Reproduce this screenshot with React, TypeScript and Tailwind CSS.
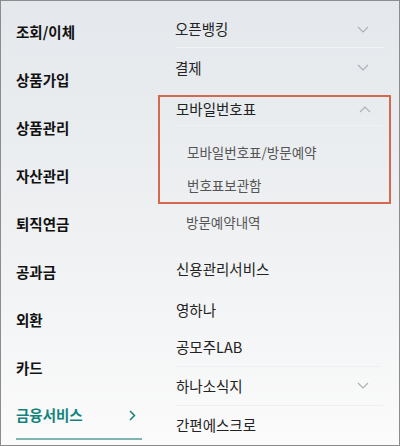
const font = { fontFamily: '"Noto Sans CJK KR", "Noto Sans", sans-serif' };

const leftMenu = ["조회/이체", "상품가입", "상품관리", "자산관리", "퇴직연금", "공과금", "외환", "카드"];

function ChevronDown() {
  return (
    <svg width="12" height="7" viewBox="0 0 12 7" fill="none" className="mr-[14px]">
      <path d="M1 1l5 5 5-5" stroke="#aab0b4" strokeWidth="1.2" />
    </svg>
  );
}

function ChevronUp() {
  return (
    <svg width="12" height="7" viewBox="0 0 12 7" fill="none" className="mr-[12px]">
      <path d="M1 6l5-5 5 5" stroke="#aab0b4" strokeWidth="1.2" />
    </svg>
  );
}

export default function App() {
  return (
    <div
      style={font}
      className="flex h-[446px] w-[400px] overflow-hidden border border-[#8c8c8c] bg-gradient-to-b from-[#e4e8ec] via-[#eef0f2] to-[#fbfbfb]"
    >
      {/* left menu */}
      <div className="flex w-[157px] shrink-0 flex-col pt-[7px]">
        {leftMenu.map((label) => (
          <div key={label} className="flex h-[48px] items-center pl-[15px] text-[14.5px] font-bold text-[#111]">
            {label}
          </div>
        ))}
        <div className="ml-[15px] mr-[16px] flex h-[48px] items-center justify-between border-b-2 border-[#7fb5b1] pr-[6px] text-[14.5px] font-bold text-[#14827d]">
          금융서비스
          <svg width="7" height="11" viewBox="0 0 7 11" fill="none">
            <path d="M1 1l4.5 4.5L1 10" stroke="#1b7f7a" strokeWidth="1.5" />
          </svg>
        </div>
      </div>

      {/* right menu */}
      <div className="flex w-[233px] flex-col pt-[10px] text-[14.5px] text-[#222]">
        <div className="mx-[17px] mr-[8px] flex h-[38px] items-center justify-between border-b border-[#f1f3f5]">
          오픈뱅킹
          <ChevronDown />
        </div>
        <div className="mx-[17px] mr-[8px] flex h-[40px] items-center justify-between">
          결제
          <ChevronDown />
        </div>

        <div className="mt-[7px] border-2 border-[#d5684f]">
          <div className="mx-[16px] mr-[6px] flex h-[29px] items-center justify-between border-b border-[#f1f3f5] pb-[3px]">
            모바일번호표
            <ChevronUp />
          </div>
          <div className="pt-[10px] text-[13.5px] text-[#555]">
            <div className="flex h-[34px] items-center pl-[27px]">모바일번호표/방문예약</div>
            <div className="flex h-[32px] items-center pl-[27px]">번호표보관함</div>
          </div>
        </div>

        <div className="flex h-[38px] items-center pl-[28px] text-[13.5px] text-[#555]">방문예약내역</div>
        <div className="mt-[6px] flex h-[44px] items-center pl-[18px]">신용관리서비스</div>
        <div className="flex h-[40px] items-center pl-[18px]">영하나</div>
        <div className="ml-[18px] mr-[10px] flex h-[38px] items-center border-b border-[#eef0f2]">공모주LAB</div>
        <div className="ml-[18px] mr-[8px] flex h-[40px] items-center justify-between border-b border-[#eef0f2]">
          하나소식지
          <ChevronDown />
        </div>
        <div className="flex h-[40px] items-center pl-[18px]">간편에스크로</div>
      </div>
    </div>
  );
}
